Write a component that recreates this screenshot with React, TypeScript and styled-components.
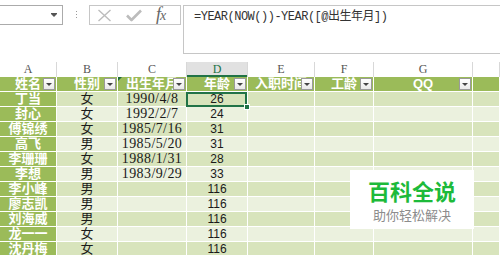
import React from 'react';
import styled, { createGlobalStyle, css } from 'styled-components';

const Global = createGlobalStyle`
  html, body { margin: 0; padding: 0; background: #fff; }
  body { width: 500px; height: 255px; overflow: hidden; font-family: "Liberation Sans", "Noto Sans CJK SC", sans-serif; }
`;

const COLS = '57px 61px 69px 61px 67px 59px 99px 1fr';
const CJK = `"Liberation Sans", "Noto Sans CJK SC", sans-serif`;

const Page = styled.div`
  position: relative;
  width: 500px;
  height: 255px;
  overflow: hidden;
  background: #fff;
`;

const FormulaBar = styled.div`
  display: flex;
  align-items: flex-start;
  height: 62px;
  padding-top: 5px;
  box-sizing: border-box;
`;

const NameBox = styled.div`
  width: 63px;
  height: 20px;
  flex: none;
  box-sizing: border-box;
  border: 1px solid #ababab;
  border-left: none;
  display: flex;
  align-items: center;
  justify-content: flex-end;
  padding-right: 5px;
`;

const DropArrow = styled.span`
  width: 0;
  height: 0;
  border-left: 3px solid transparent;
  border-right: 3px solid transparent;
  border-top: 3px solid #555;
  box-shadow: 0 -1px 0 #555;
`;

const Grip = styled.div`
  display: flex;
  flex-direction: column;
  gap: 2px;
  margin: 6px 12px 0 13px;
  & > span {
    width: 1px;
    height: 1px;
    background: #9a9a9a;
  }
`;

const FxBox = styled.div`
  width: 92px;
  height: 20px;
  flex: none;
  box-sizing: border-box;
  border: 1px solid #c6c6c6;
  display: flex;
  align-items: center;
  gap: 14px;
  padding-left: 7px;
`;

const FxText = styled.span`
  font-family: "Liberation Serif", serif;
  font-style: italic;
  color: #666;
  font-size: 18px;
  line-height: 18px;
  letter-spacing: -1px;
  & > small {
    font-size: 14px;
  }
`;

const FormulaInput = styled.div`
  flex: 1;
  height: 49px;
  margin-left: 2px;
  box-sizing: border-box;
  border: 1px solid #c6c6c6;
  border-right: none;
  padding: 3px 0 0 10px;
  font: 12px/16px "Liberation Mono", "Noto Sans CJK SC", monospace;
  letter-spacing: -0.5px;
  color: #333;
  white-space: nowrap;
`;

const Sheet = styled.div`
  display: grid;
  grid-template-columns: ${COLS};
  grid-auto-rows: 15px;
`;

const ColHead = styled.div<{ $active?: boolean }>`
  box-sizing: border-box;
  border-right: 1px solid #d8d8d8;
  font: 12px/15px "Liberation Serif", serif;
  color: #555;
  text-align: center;
  ${p =>
    p.$active &&
    css`
      background: #e1e1e1;
      color: #217346;
      box-shadow: inset 0 -2px 0 #217346;
    `}
`;

const HeadCell = styled.div<{ $flag?: boolean }>`
  position: relative;
  box-sizing: border-box;
  background: #9bbb59;
  color: #fff;
  border-right: 1px solid #fff;
  border-bottom: 1px solid #fff;
  font: bold 13px/14px ${CJK};
  text-align: center;
  white-space: nowrap;
  overflow: hidden;
  ${p =>
    p.$flag &&
    css`
      &::before {
        content: '';
        position: absolute;
        left: 0;
        top: 0;
        border-top: 4px solid #1e6b3a;
        border-right: 4px solid transparent;
      }
    `}
`;

const FilterButton = styled.span`
  position: absolute;
  right: 1px;
  top: 1px;
  width: 12px;
  height: 12px;
  box-sizing: border-box;
  border: 1px solid #9a9a9a;
  background: linear-gradient(#ffffff, #e9e9e9);
  display: flex;
  align-items: center;
  justify-content: center;
  &::after {
    content: '';
    border-left: 3px solid transparent;
    border-right: 3px solid transparent;
    border-top: 3px solid #444;
  }
`;

type Kind = 'cjk' | 'date' | 'num';

const fonts: Record<Kind, ReturnType<typeof css>> = {
  cjk: css`font: 13px/14px ${CJK};`,
  date: css`font: 14px/14px "Liberation Serif", serif; letter-spacing: 0.4px;`,
  num: css`font: 12px/14px "Liberation Sans", sans-serif;`,
};

const Cell = styled.div<{ $tone: 'dark' | 'light'; $first?: boolean; $kind: Kind; $selected?: boolean }>`
  position: relative;
  box-sizing: border-box;
  border-right: 1px solid #fff;
  border-bottom: 1px solid #fff;
  background: ${p => (p.$first ? '#9bbb59' : p.$tone === 'dark' ? '#d8e4bc' : '#ebf1de')};
  color: ${p => (p.$first ? '#fff' : '#1a1a1a')};
  text-align: center;
  white-space: nowrap;
  ${p => fonts[p.$kind]}
  ${p => p.$first && css`font-weight: bold;`}
  ${p =>
    p.$selected &&
    css`
      z-index: 1;
      &::after {
        content: '';
        position: absolute;
        left: -1px;
        top: 0;
        right: 0;
        bottom: -1px;
        border: 2px solid #217346;
      }
      &::before {
        content: '';
        position: absolute;
        right: -3px;
        bottom: -4px;
        width: 4px;
        height: 4px;
        background: #217346;
        border: 1px solid #fff;
        z-index: 2;
      }
    `}
`;

const Watermark = styled.div`
  position: absolute;
  left: 350px;
  top: 170px;
  width: 124px;
  height: 59px;
  background: #fff;
  display: flex;
  flex-direction: column;
  align-items: center;
  padding-top: 10px;
  box-sizing: border-box;
`;

const WmTitle = styled.div`
  font: bold 22px/26px ${CJK};
  color: #1dba3a;
`;

const WmSub = styled.div`
  margin-top: 2px;
  font: 13px/15px ${CJK};
  color: #8c8c8c;
`;

const letters = ['A', 'B', 'C', 'D', 'E', 'F', 'G', ''];
const headers = ['姓名', '性别', '出生年月', '年龄', '入职时间', '工龄', 'QQ', ''];

const rows: [string, string, string, string][] = [
  ['丁当', '女', '1990/4/8', '26'],
  ['封心', '女', '1992/2/7', '24'],
  ['傅锦绣', '女', '1985/7/16', '31'],
  ['高飞', '男', '1985/5/20', '31'],
  ['李珊珊', '女', '1988/1/31', '28'],
  ['李想', '男', '1983/9/29', '33'],
  ['李小峰', '男', '', '116'],
  ['廖志凯', '男', '', '116'],
  ['刘海威', '男', '', '116'],
  ['龙一一', '女', '', '116'],
  ['沈丹梅', '女', '', '116'],
];

const CancelIcon = () => (
  <svg width="15" height="13" viewBox="0 0 15 13">
    <path d="M1.5 1 L13.5 12 M13.5 1 L1.5 12" stroke="#bcbcbc" strokeWidth="1.4" fill="none" />
  </svg>
);

const CheckIcon = () => (
  <svg width="16" height="13" viewBox="0 0 16 13">
    <path d="M1 6.5 L5.5 11 L15 1.5" stroke="#bcbcbc" strokeWidth="2.6" fill="none" strokeLinejoin="round" />
  </svg>
);

export default function App() {
  return (
    <Page>
      <Global />
      <FormulaBar>
        <NameBox>
          <DropArrow />
        </NameBox>
        <Grip>
          <span />
          <span />
          <span />
        </Grip>
        <FxBox>
          <CancelIcon />
          <CheckIcon />
          <FxText>
            f<small>x</small>
          </FxText>
        </FxBox>
        <FormulaInput>=YEAR(NOW())-YEAR([@出生年月])</FormulaInput>
      </FormulaBar>
      <Sheet>
        {letters.map((l, i) => (
          <ColHead key={'c' + i} $active={l === 'D'}>
            {l}
          </ColHead>
        ))}
        {headers.map((h, i) => (
          <HeadCell key={'h' + i} $flag={i === 2}>
            {h}
            {i < 7 && <FilterButton />}
          </HeadCell>
        ))}
        {rows.map((r, ri) => {
          const tone = ri % 2 === 0 ? 'dark' : 'light';
          return (
            <React.Fragment key={'r' + ri}>
              <Cell $tone={tone} $first $kind="cjk">{r[0]}</Cell>
              <Cell $tone={tone} $kind="cjk">{r[1]}</Cell>
              <Cell $tone={tone} $kind="date">{r[2]}</Cell>
              <Cell $tone={tone} $kind="num" $selected={ri === 0}>{r[3]}</Cell>
              <Cell $tone={tone} $kind="cjk" />
              <Cell $tone={tone} $kind="cjk" />
              <Cell $tone={tone} $kind="cjk" />
              <Cell $tone={tone} $kind="cjk" />
            </React.Fragment>
          );
        })}
      </Sheet>
      <Watermark>
        <WmTitle>百科全说</WmTitle>
        <WmSub>助你轻松解决</WmSub>
      </Watermark>
    </Page>
  );
}
